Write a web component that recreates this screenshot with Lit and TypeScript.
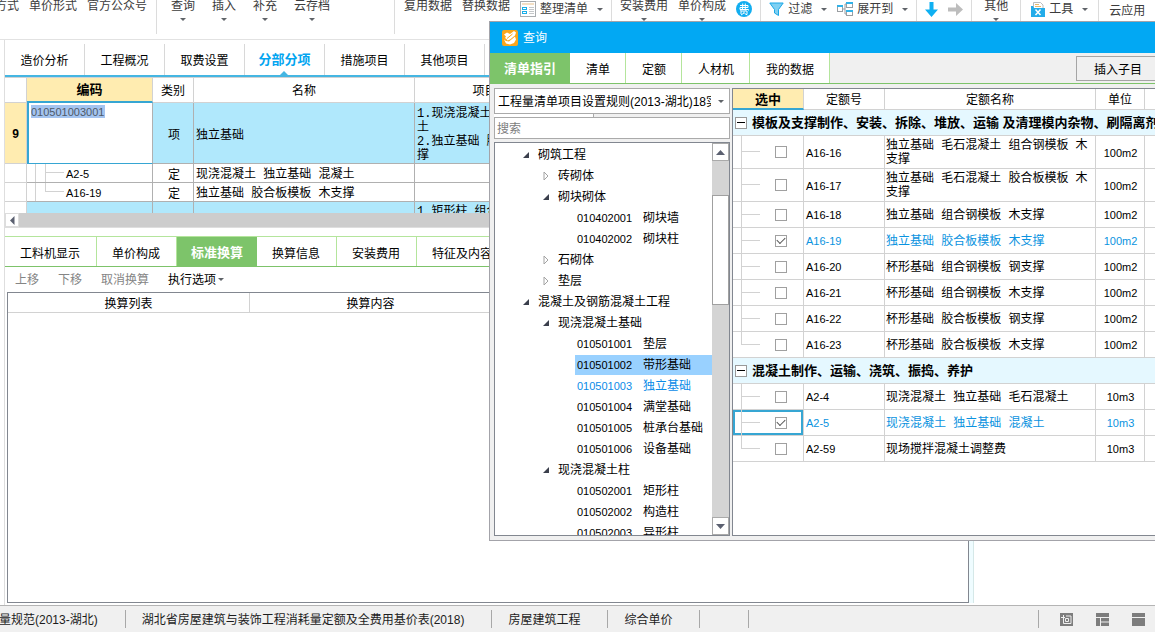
import { LitElement, html, css, svg, nothing } from "lit";
import { customElement, state } from "lit/decorators.js";
import { classMap } from "lit/directives/class-map.js";

const base = css`
  *, *::before, *::after { box-sizing: border-box; }
  button, input, select {
    font: inherit;
    color: inherit;
    margin: 0;
    padding: 0;
    border: 0;
    border-radius: 0;
    background: none;
    outline: none;
  }
  button { white-space: nowrap; }
  svg { display: block; flex: none; }
  table { border-collapse: separate; border-spacing: 0; table-layout: fixed; }
  td, th { padding: 0; font-weight: normal; }
  ul { list-style: none; margin: 0; padding: 0; }
  .chev {
    flex: none;
    width: 0;
    height: 0;
    border: 3px solid transparent;
    border-top-color: #5f6368;
    border-bottom-width: 0;
  }
  .mono { font-family: "Liberation Mono", "Noto Sans CJK SC", monospace; }
  .code { font-size: 11px; }
`;

const listIcon = html`<svg width="16" height="16" viewBox="0 0 16 16">
  <rect x=".5" y=".5" width="15" height="15" fill="#fff" stroke="#a9adb0" />
  <rect x="2" y="2" width="12" height="2" fill="#f3dfc4" />
  <rect x="2.5" y="6.5" width="4" height="2" fill="#fff" stroke="#19aee8" />
  <rect x="2.5" y="10.5" width="4" height="2" fill="#fff" stroke="#19aee8" />
  <path d="M9 6.500h5M9 8.500h5M9 10.500h5M9 12.500h5" stroke="#c4c7c9" />
</svg>`;
const feeIcon = html`<svg width="16" height="16" viewBox="0 0 16 16">
  <circle cx="8" cy="8" r="8" fill="#12aef0" />
  <path d="M4 4.500h8v2H4v2h8.500v1M6.700 2.500v4.500q0 1.500-2.500 2.500M9.300 2.500v7M5 13v-3h6v3M8 10.500v1.500l-3 2M8.500 12.500l3 1.500" fill="none" stroke="#fff" />
</svg>`;
const filterIcon = html`<svg width="15" height="15" viewBox="0 0 15 15">
  <path d="M.8 1h13.400L9.500 7.500v6l-4-2.500V7.500z" fill="#7fd0f2" stroke="#1aa7e6" />
</svg>`;
const expandIcon = html`<svg width="16" height="16" viewBox="0 0 16 16">
  <path d="M6 8h2M8 3v10M8 3h2M8 13h2" stroke="#9a9ea2" fill="none" />
  <rect x=".5" y="4.500" width="5" height="6" fill="#fff" stroke="#9a9ea2" />
  <path d="M0 5h6" stroke="#31b2e8" stroke-width="2" />
  <rect x="9.500" y="1.500" width="6" height="5" fill="#fff" stroke="#9a9ea2" />
  <path d="M9 2h7" stroke="#31b2e8" stroke-width="2" />
  <rect x="9.500" y="9.500" width="6" height="5" fill="#fff" stroke="#9a9ea2" />
  <path d="M9 10h7" stroke="#31b2e8" stroke-width="2" />
</svg>`;
const downIcon = html`<svg width="13" height="15" viewBox="0 0 13 15">
  <path d="M4.500 0h4v7.500H13L6.500 15 0 7.500h4.500z" fill="#0fb0f2" />
</svg>`;
const rightIcon = html`<svg width="15" height="15" viewBox="0 0 15 15">
  <path d="M0 5.500h8V1l7 6.500L8 14V9.500H0z" fill="#bdbdbd" />
</svg>`;
const toolIcon = html`<svg width="14" height="15" viewBox="0 0 14 15">
  <path d="M2.500 6V.5h7L12 3v3" fill="#fff" stroke="#b8bcbf" />
  <path d="M4 2.500h4M4 4.500h6" stroke="#e8b96a" />
  <path d="M0 4h2l1 2h11v9H0z" fill="#23ace9" />
  <path d="M4.500 7.500l5 5.500M9.500 7.500l-5 5.500" stroke="#fff" stroke-width="1.500" />
</svg>`;
const appIcon = html`<svg width="16" height="16" viewBox="0 0 16 16">
  <rect width="16" height="16" rx="2" fill="#f9a61c" />
  <path d="M2 4.500l3-2 3 1.500 4-3 2 1.500-1 3-5 4-2.500 1-1-1.500-1.500-1 1-1.500z" fill="#fff" />
  <path d="M2 9.500l2 1.500 3 .5 6-5 1 3-2 3.500-4 1.500-4-1z" fill="#fff" />
  <path d="M5 8.500l5.500-4.500" stroke="#f9a61c" />
</svg>`;
const arrow = (d: string) => html`<svg width="9" height="9" viewBox="0 0 9 9"><path d=${d} fill="#5b6070" /></svg>`;
const openMark = html`<svg width="8" height="8" viewBox="0 0 8 8"><path d="M7 1v6H1z" fill="#3b3f4c" /></svg>`;
const shutMark = html`<svg width="8" height="10" viewBox="0 0 8 10"><path d="M2 1l4 4-4 4z" fill="#fff" stroke="#a3a3a3" /></svg>`;

interface TreeNode {
  level: number;
  name: string;
  code?: string;
  open?: boolean;
  look?: string;
}

const TREE: TreeNode[] = [
  { level: 1, name: "砌筑工程", open: true },
  { level: 2, name: "砖砌体" },
  { level: 2, name: "砌块砌体", open: true },
  { level: 3, code: "010402001", name: "砌块墙" },
  { level: 3, code: "010402002", name: "砌块柱" },
  { level: 2, name: "石砌体" },
  { level: 2, name: "垫层" },
  { level: 1, name: "混凝土及钢筋混凝土工程", open: true },
  { level: 2, name: "现浇混凝土基础", open: true },
  { level: 3, code: "010501001", name: "垫层" },
  { level: 3, code: "010501002", name: "带形基础", look: "selected" },
  { level: 3, code: "010501003", name: "独立基础", look: "used" },
  { level: 3, code: "010501004", name: "满堂基础" },
  { level: 3, code: "010501005", name: "桩承台基础" },
  { level: 3, code: "010501006", name: "设备基础" },
  { level: 2, name: "现浇混凝土柱", open: true },
  { level: 3, code: "010502001", name: "矩形柱" },
  { level: 3, code: "010502002", name: "构造柱" },
  { level: 3, code: "010502003", name: "异形柱" },
];

interface Quota {
  code: string;
  name: string;
  unit: string;
  on?: boolean;
  focus?: boolean;
}

const GROUPS: { title: string; rows: Quota[] }[] = [
  {
    title: "模板及支撑制作、安装、拆除、堆放、运输 及清理模内杂物、刷隔离剂等",
    rows: [
      { code: "A16-16", name: "独立基础 毛石混凝土 组合钢模板 木支撑", unit: "100m2" },
      { code: "A16-17", name: "独立基础 毛石混凝土 胶合板模板 木支撑", unit: "100m2" },
      { code: "A16-18", name: "独立基础 组合钢模板 木支撑", unit: "100m2" },
      { code: "A16-19", name: "独立基础 胶合板模板 木支撑", unit: "100m2", on: true },
      { code: "A16-20", name: "杯形基础 组合钢模板 钢支撑", unit: "100m2" },
      { code: "A16-21", name: "杯形基础 组合钢模板 木支撑", unit: "100m2" },
      { code: "A16-22", name: "杯形基础 胶合板模板 钢支撑", unit: "100m2" },
      { code: "A16-23", name: "杯形基础 胶合板模板 木支撑", unit: "100m2" },
    ],
  },
  {
    title: "混凝土制作、运输、浇筑、振捣、养护",
    rows: [
      { code: "A2-4", name: "现浇混凝土 独立基础 毛石混凝土", unit: "10m3" },
      { code: "A2-5", name: "现浇混凝土 独立基础 混凝土", unit: "10m3", on: true, focus: true },
      { code: "A2-59", name: "现场搅拌混凝土调整费", unit: "10m3" },
    ],
  },
];

@customElement("query-dialog")
export class QueryDialog extends LitElement {
  static styles = [
    base,
    css`
      :host {
        display: flex;
        flex-direction: column;
        background: #f0f0f0;
        border: 1px solid #a3a3a9;
        border-right: 0;
        overflow: hidden;
      }
      .title {
        display: flex;
        align-items: center;
        gap: 5px;
        height: 31px;
        padding-left: 12px;
        background: #02a8f3;
        color: #fff;
      }
      .tabs {
        display: flex;
        height: 31px;
        border-bottom: 1px solid #7dc36a;
      }
      .tab {
        padding: 4px 15px 0 16px;
        background: #fff;
        border-right: 1px solid #b4e59c;
      }
      .tab.active {
        padding: 2px 13px 0 14px;
        background: #7dc46a;
        border-color: #7dc46a;
        color: #fff;
        font-size: 13px;
        font-weight: bold;
      }
      .insert {
        width: 84px;
        height: 25px;
        margin: 3px -5px 0 auto;
        padding-top: 2px;
        border: 1px solid #a5a5a5;
      }
      .body {
        flex: 1;
        min-height: 0;
        display: flex;
        gap: 2px;
        padding: 4px 0 4px 4px;
      }
      .left {
        flex: none;
        display: flex;
        flex-direction: column;
        width: 236px;
      }
      .pick { position: relative; }
      .pick .chev {
        position: absolute;
        right: 6px;
        top: 12px;
      }
      .rule {
        display: block;
        appearance: none;
        width: 100%;
        height: 26px;
        padding: 2px 18px 0 3px;
        background: #fff;
        border: 1px solid #aaa;
      }
      .strip {
        width: 100px;
        height: 3px;
        background: #fff;
        border-right: 1px solid #aaa;
      }
      .search {
        height: 22px;
        padding: 1px 2px 0;
        background: #fff;
        border: 1px solid #aaa;
      }
      .search::placeholder { color: #7d7d7d; opacity: 1; }
      .treebox {
        flex: 1;
        min-height: 0;
        display: flex;
        margin-top: 3px;
        background: #fff;
        border: 1px solid #828790;
      }
      .tree {
        flex: 1;
        padding-top: 1px;
        overflow: hidden;
      }
      .node {
        display: flex;
        align-items: center;
        height: 21px;
        white-space: nowrap;
      }
      .l1 { padding-left: 27px; }
      .l2 { padding-left: 47px; }
      .l3 { padding-left: 80px; }
      .toggle { width: 16px; }
      .leaf {
        flex: 1;
        display: flex;
        align-items: center;
        height: 20px;
        padding-left: 2px;
      }
      .leaf .code { width: 66px; }
      .selected { background: #99d1ff; }
      .used { color: #0a8be8; }
      .vbar {
        flex: none;
        display: flex;
        flex-direction: column;
        width: 17px;
        background: #d4d4d4;
      }
      .vbtn {
        display: grid;
        place-items: center;
        height: 18px;
        background: #fff;
        border: 1px solid #aaa;
      }
      .thumb {
        height: 110px;
        margin: 34px 0 auto;
        background: #fff;
        border: 1px solid #a0a0a0;
      }
      .gridbox {
        flex: 1;
        min-width: 0;
        overflow: hidden;
        background: #fff;
        border: 1px solid #828790;
        border-right: 0;
      }
      table { width: 100%; }
      .c1 { width: 71px; }
      .c2 { width: 81px; }
      .c3 { width: 211px; }
      .c4 { width: 49px; }
      th, td {
        border: 0 solid #d2d2d2;
        border-width: 0 1px 1px 0;
        line-height: 14px;
      }
      th:last-child, td:last-child { border-right: 0; }
      th { height: 21px; padding-top: 2px; }
      td { height: 26px; padding: 1px 1px 0 2px; }
      td.mono { padding: 3px 1px 1px; }
      .hot {
        background: #ffecb0;
        border-bottom: 2px solid #36a6d3;
        font-size: 13px;
        font-weight: bold;
      }
      .group {
        padding: 0 0 0 2px;
        background: #e5f8ff;
        font-size: 13px;
        font-weight: bold;
        white-space: nowrap;
        overflow: hidden;
      }
      .groupline {
        display: flex;
        align-items: center;
        gap: 5px;
      }
      .fold {
        flex: none;
        display: grid;
        place-items: center;
        width: 12px;
        height: 12px;
        background: #fff;
        border: 1px solid #999;
      }
      .fold::before {
        content: "";
        width: 8px;
        height: 1px;
        background: #000;
      }
      .unit { text-align: center; }
      .on td { color: #0a93e0; }
      td.check { height: 26px; padding: 0; }
      .branch {
        display: grid;
        grid-template: 1fr 1fr / 9px 18px 1fr;
        align-items: center;
        height: 25px;
      }
      .tall .branch { height: 32px; }
      .stem {
        grid-area: 1 / 1 / 3 / 2;
        height: 100%;
        border-right: 1px solid #d2d2d2;
      }
      .last .stem { grid-row: 1 / 2; }
      .twig {
        grid-area: 1 / 2 / 2 / 3;
        align-self: end;
        height: 1px;
        background: #d2d2d2;
      }
      .focus { box-shadow: inset 0 0 0 2px #36a6d3; }
      .box {
        grid-area: 1 / 3 / 3 / 4;
        justify-self: start;
        appearance: none;
        display: grid;
        place-items: center;
        width: 12px;
        height: 12px;
        margin-left: 15px;
        background: #fff;
        border: 1px solid #a0a0a0;
      }
      .box:checked::before {
        content: "";
        width: 8px;
        height: 5px;
        margin-bottom: 2px;
        border: 0 solid #555;
        border-width: 0 0 1px 1px;
        rotate: -45deg;
      }
    `,
  ];

  private node(n: TreeNode) {
    if (n.level === 3) {
      return html`<li class="node l3">
        <span class=${"leaf " + (n.look ?? "")}><span class="code">${n.code}</span><span>${n.name}</span></span>
      </li>`;
    }
    return html`<li class=${"node l" + n.level}>
      <button class="toggle" aria-label=${n.name} aria-expanded=${n.open ? "true" : "false"}>${n.open ? openMark : shutMark}</button>
      <span>${n.name}</span>
    </li>`;
  }

  private quota(q: Quota, last: boolean) {
    const tall = q.name.length > 19;
    return html`<tr class=${classMap({ on: !!q.on, last, tall })}>
      <td class=${classMap({ check: true, focus: !!q.focus })}>
        <div class="branch">
          <span class="stem"></span><span class="twig"></span>
          <input class="box" type="checkbox" id=${q.code} .checked=${!!q.on} />
        </div>
      </td>
      <td class="code"><label for=${q.code}>${q.code}</label></td>
      <td class="mono">${q.name}</td>
      <td class="code unit">${q.unit}</td>
      <td></td>
    </tr>`;
  }

  render() {
    return html`
      <div class="title">${appIcon}<span>查询</span></div>
      <div class="tabs">
        <button class="tab active">清单指引</button>
        <button class="tab">清单</button>
        <button class="tab">定额</button>
        <button class="tab">人材机</button>
        <button class="tab">我的数据</button>
        <button class="insert">插入子目</button>
      </div>
      <div class="body">
        <div class="left">
          <div class="pick">
            <select class="rule" aria-label="清单规则">
              <option>工程量清单项目设置规则(2013-湖北)18实施</option>
            </select>
            <span class="chev"></span>
          </div>
          <div class="strip"></div>
          <input class="search" type="text" placeholder="搜索" aria-label="搜索" />
          <div class="treebox">
            <ul class="tree">${TREE.map((n) => this.node(n))}</ul>
            <div class="vbar">
              <button class="vbtn" aria-label="向上">${arrow("M0 7l4.500-5L9 7z")}</button>
              <div class="thumb"></div>
              <button class="vbtn" aria-label="向下">${arrow("M0 2l4.500 5L9 2z")}</button>
            </div>
          </div>
        </div>
        <div class="gridbox">
          <table>
            <colgroup><col class="c1" /><col class="c2" /><col class="c3" /><col class="c4" /><col /></colgroup>
            <thead>
              <tr><th class="hot">选中</th><th>定额号</th><th>定额名称</th><th>单位</th><th></th></tr>
            </thead>
            <tbody>
              ${GROUPS.map(
                (g) => html`<tr>
                    <td class="group" colspan="5">
                      <div class="groupline"><button class="fold" aria-label="折叠"></button><span>${g.title}</span></div>
                    </td>
                  </tr>
                  ${g.rows.map((q, i) => this.quota(q, i === g.rows.length - 1))}`
              )}
            </tbody>
          </table>
        </div>
      </div>
    `;
  }
}

@customElement("app-root")
export class AppRoot extends LitElement {
  @state() private code = "010501003001";

  static styles = [
    base,
    css`
      :host {
        position: relative;
        display: flex;
        flex-direction: column;
        height: 100vh;
        overflow: hidden;
        background: #fff;
        color: #000;
        font: 12px/16px "Liberation Sans", "Noto Sans CJK SC", sans-serif;
      }
      .ribbon {
        flex: none;
        display: flex;
        height: 40px;
        border-bottom: 1px solid #e2e2e2;
        color: #3c3c3c;
        overflow: hidden;
      }
      .set {
        flex: none;
        display: flex;
        align-items: flex-start;
        gap: 10px;
        height: 34px;
        padding: 0 8px;
        border-right: 1px solid #dcdcdc;
      }
      .first { margin-left: -13px; padding-right: 9px; }
      .wide { width: 238px; gap: 17px; padding-left: 14px; }
      .roomy { padding-left: 9px; }
      .mid { padding: 0 12px; }
      .loose { padding: 0 10px; }
      .tall {
        display: flex;
        flex-direction: column;
        align-items: center;
        gap: 4px;
        margin-top: -2px;
      }
      .flat {
        display: flex;
        align-items: center;
        gap: 4px;
        height: 18px;
      }
      .flat .chev { margin: 0 0 0 5px; }
      .low { margin-top: 2px; }
      .frame {
        flex: 1;
        min-height: 0;
        display: flex;
        flex-direction: column;
        margin-left: 4px;
        border-left: 1px solid #dedede;
      }
      .maintabs {
        flex: none;
        display: flex;
        height: 37px;
        padding-top: 4px;
        border-bottom: 2px solid #45b6e2;
      }
      .mtab {
        position: relative;
        width: 80px;
        padding-top: 2px;
        border-right: 1px solid #d8d8d8;
      }
      .mtab.active {
        padding-top: 0;
        color: #02a5f0;
        font-size: 13px;
        font-weight: bold;
      }
      .mtab.active::after {
        content: "";
        position: absolute;
        left: 35px;
        bottom: 0;
        border: 4px solid transparent;
        border-top-width: 0;
        border-bottom-color: #45b6e2;
      }
      .split {
        flex: 1;
        min-height: 0;
        display: flex;
      }
      .work {
        flex: 1;
        min-width: 0;
        display: flex;
        flex-direction: column;
      }
      .side {
        flex: none;
        width: 186px;
        margin-bottom: 2px;
        border-left: 4px solid #effcff;
      }
      .side::before {
        content: "";
        display: block;
        height: 100%;
        border-left: 1px solid #d5e8e8;
      }
      .bill {
        flex: none;
        height: 136px;
        overflow: hidden;
        border-top: 1px solid #d2d2d2;
      }
      .bill table { width: 100%; }
      .b0 { width: 22px; }
      .b1 { width: 126px; }
      .b2 { width: 41px; }
      .b3 { width: 221px; }
      .b4 { width: 164px; }
      .bill th, .bill td {
        height: 19px;
        border: 0 solid #b0b0b0;
        border-width: 0 1px 1px 0;
        line-height: 14px;
      }
      .bill th { height: 25px; padding-top: 1px; border-color: #d2d2d2; }
      .bill td { padding: 3px 0 0 2px; }
      .bill .num {
        padding: 1px 0 0;
        border-color: #d2d2d2;
        text-align: center;
        font-weight: bold;
      }
      .bill .hot {
        background: #ffecb0;
        border-bottom: 2px solid #36a6d3;
        font-size: 13px;
        font-weight: bold;
      }
      .sky td { height: 61px; background: #b0e8fc; }
      .bill .nine { background: #ffecb0; }
      .bill .plain { background: #fff; }
      .bill .top { vertical-align: top; }
      .bill .edit {
        padding: 2px 2px;
        background: #fff;
        border-left: 2px solid #36a6d3;
        border-bottom-color: #36a6d3;
        vertical-align: top;
      }
      .field {
        display: block;
        width: 74px;
        height: 13px;
        background: #a4c4f0;
        color: #4e5a68;
        font-size: 11px;
      }
      .mid-cell { text-align: center; }
      .kid {
        display: grid;
        grid-template: 9px 9px / 8px 10px 18px 1fr;
        height: 18px;
      }
      .bill .knot { padding: 0 0 0 1px; }
      .rail, .stem {
        grid-row: 1 / 3;
        border-right: 1px solid #d2d2d2;
      }
      .end .stem { grid-row: 1 / 2; }
      .twig {
        grid-area: 1 / 3 / 2 / 4;
        border-bottom: 1px solid #d2d2d2;
      }
      .kid .code {
        grid-area: 1 / 4 / 3 / 5;
        align-self: center;
        padding: 2px 0 0 2px;
      }
      .hbar {
        flex: none;
        display: flex;
        height: 15px;
        background: #cdcdcd;
        border-bottom: 1px solid #dedede;
      }
      .hbtn {
        display: grid;
        place-items: center;
        width: 14px;
        background: #fff;
        border: 1px solid #ddd;
      }
      .lowtabs {
        flex: none;
        display: flex;
        height: 31px;
        margin-top: 8px;
        border-top: 1px solid #b4e59c;
        border-bottom: 1px solid #7dc36a;
      }
      .ltab {
        padding: 4px 16px 0 15px;
        border-right: 1px solid #b4e59c;
      }
      .ltab.active {
        padding: 2px 13px 0 14px;
        background: #7dc46a;
        border-color: #7dc46a;
        color: #fff;
        font-size: 13px;
        font-weight: bold;
      }
      .tools {
        flex: none;
        display: flex;
        align-items: center;
        gap: 19px;
        height: 25px;
        padding-left: 10px;
      }
      .tool { display: flex; align-items: center; gap: 2px; }
      .tool:disabled { color: #858585; }
      .conv {
        flex: 1;
        margin: 0 0 2px 2px;
        border: 1px solid #828790;
      }
      .conv table { width: 100%; }
      .conv th {
        height: 20px;
        padding-top: 2px;
        border: 0 solid #d2d2d2;
        border-width: 0 1px 1px 0;
      }
      .v1, .v2 { width: 242px; }
      .status {
        flex: none;
        display: flex;
        align-items: center;
        height: 27px;
        border-top: 1px solid #b4b4b4;
        background: #f0f0f0;
        color: #1c1c1c;
        white-space: nowrap;
      }
      .part {
        flex: none;
        height: 18px;
        padding: 2px 27px 0 16px;
        border-right: 1px solid #a8a8a8;
      }
      .lead { padding-left: 0; margin-left: -1px; }
      .slot { padding: 0 24px; }
      .views {
        display: flex;
        align-items: center;
        gap: 23px;
        height: 18px;
        margin-left: auto;
        padding: 0 10px 0 21px;
        border-left: 1px solid #a8a8a8;
      }
      .dialog {
        position: absolute;
        left: 489px;
        right: 0;
        top: 21px;
        height: 520px;
      }
    `,
  ];

  private tall(label: string, menu = false) {
    return html`<button class="tall">${label}${menu ? html`<span class="chev"></span>` : nothing}</button>`;
  }

  private flat(icon: unknown, label: string) {
    return html`<button class="flat">${icon}<span>${label}</span><span class="chev"></span></button>`;
  }

  private child(code: string, name: string, end: boolean) {
    return html`<tr class=${classMap({ end })}>
      <td class="num"></td>
      <td class="knot">
        <div class="kid"><span class="rail"></span><span class="stem"></span><span class="twig"></span><span class="code">${code}</span></div>
      </td>
      <td class="mid-cell">定</td>
      <td class="mono">${name}</td>
      <td></td>
      <td></td>
    </tr>`;
  }

  private view(label: string, shape: unknown) {
    return html`<button aria-label=${label}><svg width="13" height="13" viewBox="0 0 13 13">${shape}</svg></button>`;
  }

  render() {
    return html`
      <div class="ribbon">
        <div class="set first">${this.tall("方式")}${this.tall("单价形式")}${this.tall("官方公众号")}</div>
        <div class="set wide">
          ${this.tall("查询", true)}${this.tall("插入", true)}${this.tall("补充", true)}${this.tall("云存档", true)}
        </div>
        <div class="set roomy">${this.tall("复用数据")}${this.tall("替换数据")}${this.flat(listIcon, "整理清单")}</div>
        <div class="set">
          ${this.tall("安装费用", true)}${this.tall("单价构成", true)}
          <button class="flat" aria-label="费用">${feeIcon}</button>
        </div>
        <div class="set">${this.flat(filterIcon, "过滤")}${this.flat(expandIcon, "展开到")}</div>
        <div class="set">
          <button class="flat" aria-label="下移">${downIcon}</button>
          <button class="flat" aria-label="右移">${rightIcon}</button>
        </div>
        <div class="set mid">${this.tall("其他", true)}</div>
        <div class="set loose">${this.flat(toolIcon, "工具")}</div>
        <div class="set loose"><button class="flat low">云应用</button></div>
      </div>

      <div class="frame">
        <div class="maintabs">
          ${["造价分析", "工程概况", "取费设置", "分部分项", "措施项目", "其他项目"].map(
            (t) => html`<button class=${classMap({ mtab: true, active: t === "分部分项" })}>${t}</button>`
          )}
        </div>
        <div class="split">
          <div class="work">
            <div class="bill">
              <table>
                <colgroup>
                  <col class="b0" /><col class="b1" /><col class="b2" /><col class="b3" /><col class="b4" /><col />
                </colgroup>
                <thead>
                  <tr><th></th><th class="hot">编码</th><th>类别</th><th>名称</th><th>项目特征</th><th></th></tr>
                </thead>
                <tbody>
                  <tr class="sky">
                    <td class="num nine">9</td>
                    <td class="edit"><input class="field" type="text" aria-label="编码" .value=${this.code} /></td>
                    <td class="mid-cell">项</td>
                    <td>独立基础</td>
                    <td class="mono">1.现浇混凝土 独立基础 混凝土<br />2.独立基础 胶合板模板 木支撑</td>
                    <td></td>
                  </tr>
                  ${this.child("A2-5", "现浇混凝土 独立基础 混凝土", false)}
                  ${this.child("A16-19", "独立基础 胶合板模板 木支撑", true)}
                  <tr class="sky">
                    <td class="num plain"></td>
                    <td></td>
                    <td></td>
                    <td></td>
                    <td class="mono top">1.矩形柱 组合钢模板 钢支撑</td>
                    <td></td>
                  </tr>
                </tbody>
              </table>
            </div>
            <div class="hbar"><button class="hbtn" aria-label="向左">${arrow("M6.500 0v9L2 4.500z")}</button></div>
            <div class="lowtabs">
              ${["工料机显示", "单价构成", "标准换算", "换算信息", "安装费用", "特征及内容"].map(
                (t) => html`<button class=${classMap({ ltab: true, active: t === "标准换算" })}>${t}</button>`
              )}
            </div>
            <div class="tools">
              <button class="tool" disabled>上移</button>
              <button class="tool" disabled>下移</button>
              <button class="tool" disabled>取消换算</button>
              <button class="tool">执行选项<span class="chev"></span></button>
            </div>
            <div class="conv">
              <table>
                <colgroup><col class="v1" /><col class="v2" /><col /></colgroup>
                <thead><tr><th>换算列表</th><th>换算内容</th><th></th></tr></thead>
              </table>
            </div>
          </div>
          <div class="side"></div>
        </div>
      </div>

      <div class="status">
        <span class="part lead">量规范(2013-湖北)</span>
        <span class="part">湖北省房屋建筑与装饰工程消耗量定额及全费用基价表(2018)</span>
        <span class="part">房屋建筑工程</span>
        <span class="part">综合单价</span>
        <span class="part slot"></span>
        <div class="views">
          ${this.view("居中", svg`<path d="M0 0h13v13H0z" fill="#7d7d7d"/><path d="M1 4.500h4M3.500 2v8.500h7.500v-7.500H6M5.500 5.500h3v3h-3z" fill="none" stroke="#f0f0f0"/>`)}
          ${this.view("分栏", svg`<path d="M0 0h13v4H0zM0 5h4v8H0zM5 5h8v3.500H5zM5 9.500h8v3.500H5z" fill="#7d7d7d"/>`)}
          ${this.view("上下", svg`<path d="M0 0h13v4H0zM0 5h13v8H0z" fill="#7d7d7d"/>`)}
        </div>
      </div>

      <query-dialog class="dialog"></query-dialog>
    `;
  }
}
